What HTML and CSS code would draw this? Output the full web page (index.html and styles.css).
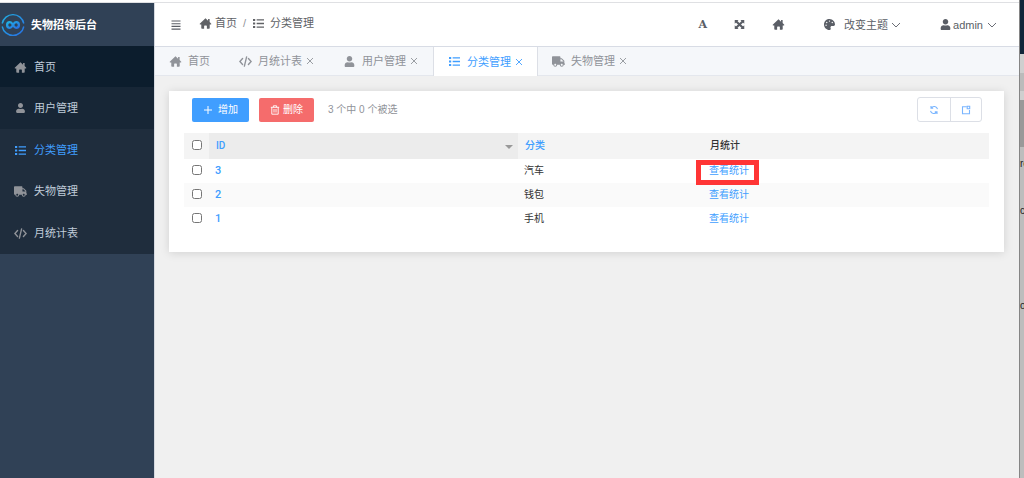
FILE: index.html
```html
<!DOCTYPE html>
<html lang="zh-CN">
<head>
<meta charset="utf-8">
<title>失物招领后台</title>
<link rel="stylesheet" href="styles.css">
</head>
<body>
<svg class="sprite" aria-hidden="true">
  <symbol id="home" viewBox="0 0 13 12"><path d="M6.500.400L.200 6.200q-.300.700.500.800H1.900V11q0 .800.800.800H5V8.600q0-.500.500-.500h2q.500 0 .500.500v3.200h2.300q.800 0 .800-.800V7h1.200q.800-.100.500-.800L11 4.400V1.200H9.300v1.700z"/></symbol>
  <symbol id="user" viewBox="0 0 448 512"><path d="M224 256c70.7 0 128-57.3 128-128S294.7 0 224 0 96 57.3 96 128s57.3 128 128 128zm89.6 32h-16.7c-22.2 10.2-46.9 16-72.9 16s-50.6-5.8-72.9-16h-16.7C60.2 288 0 348.2 0 422.4V464c0 26.5 21.5 48 48 48h352c26.5 0 48-21.5 48-48v-41.6c0-74.2-60.2-134.4-134.4-134.4z"/></symbol>
  <symbol id="list" viewBox="0 0 12 12"><path d="M0 1h2.400v2.200H0zM0 4.900h2.400v2.200H0zM0 8.800h2.400V11H0zM4 1.400h8v1.400H4zM4 5.300h8v1.400H4zM4 9.200h8v1.400H4z"/></symbol>
  <symbol id="truck" viewBox="0 0 640 512"><path d="M624 352h-16V243.900c0-12.700-5.100-24.900-14.100-33.900L494 110.100c-9-9-21.200-14.100-33.900-14.100H416V48c0-26.500-21.500-48-48-48H48C21.500 0 0 21.500 0 48v320c0 26.500 21.500 48 48 48h16c0 53 43 96 96 96s96-43 96-96h128c0 53 43 96 96 96s96-43 96-96h48c8.800 0 16-7.200 16-16v-32c0-8.800-7.200-16-16-16zM160 464c-26.500 0-48-21.500-48-48s21.500-48 48-48 48 21.500 48 48-21.500 48-48 48zm320 0c-26.500 0-48-21.500-48-48s21.500-48 48-48 48 21.500 48 48-21.500 48-48 48zm80-208H416V144h44.100l99.900 99.900V256z"/></symbol>
  <symbol id="code" viewBox="0 0 14 12"><path d="M3.800 2.800L.9 6l2.900 3.200M10.200 2.800L13.100 6l-2.900 3.200M8.200 1L5.800 11" fill="none" stroke="currentColor" stroke-width="1.500" stroke-linecap="round"/></symbol>
  <symbol id="palette" viewBox="0 0 512 512"><path d="M204.300 5C104.900 24.400 24.800 104.300 5.200 203.400c-37 187 131.700 326.400 258.800 306.700 41.200-6.400 61.400-54.600 42.500-91.700-23.100-45.400 9.900-98.400 60.900-98.400h79.700c35.800 0 64.800-29.600 64.900-65.300C511.500 97.100 368.100-26.900 204.300 5zM96 320c-17.700 0-32-14.300-32-32s14.300-32 32-32 32 14.300 32 32-14.300 32-32 32zm32-128c-17.700 0-32-14.300-32-32s14.300-32 32-32 32 14.300 32 32-14.300 32-32 32zm128-64c-17.700 0-32-14.300-32-32s14.300-32 32-32 32 14.300 32 32-14.300 32-32 32zm128 64c-17.700 0-32-14.300-32-32s14.300-32 32-32 32 14.300 32 32-14.300 32-32 32z"/></symbol>
  <symbol id="expand" viewBox="0 0 12 12"><path d="M.8 1h4.200L.8 5.200zM11.200 1v4.200L7 1zM.8 11V6.800L5 11zM11.200 11H7l4.200-4.200z"/><path d="M2.300 2.500l7.400 7M9.700 2.500l-7.400 7" stroke="currentColor" stroke-width="2.400"/></symbol>
  <symbol id="bars" viewBox="0 0 10 10"><path d="M.5 1h9M.5 3.700h9M.5 6.400h9M.5 9.100h9" stroke="currentColor" stroke-width="1.100"/></symbol>
  <symbol id="close" viewBox="0 0 8 8"><path d="M1 1l6 6M7 1L1 7" stroke="currentColor" stroke-width=".9"/></symbol>
  <symbol id="down" viewBox="0 0 10 10"><path d="M1 3l4 4 4-4" fill="none" stroke="currentColor" stroke-width=".9"/></symbol>
  <symbol id="plus" viewBox="0 0 10 10"><path d="M5 1v8M1 5h8" stroke="currentColor"/></symbol>
  <symbol id="trash" viewBox="0 0 10 10"><path d="M.8 2.300h8.400M3.400 2.300V.8h3.200v1.500M1.800 2.300v6.900h6.400V2.300M4 4v3.500M6 4v3.500" fill="none" stroke="currentColor" stroke-width=".9"/></symbol>
  <symbol id="refresh" viewBox="0 0 10 10"><path d="M2.200 2.800a3.600 3.600 0 0 1 6.300 1.400M7.800 7.200a3.600 3.600 0 0 1-6.300-1.400M2 .9v2.200h2.200M8 9.100V6.900H5.800" fill="none" stroke="currentColor" stroke-width="1.100"/></symbol>
  <symbol id="export" viewBox="0 0 10 10"><path d="M5.500 1.800H1.500v7h7V5M6.200 1.300h2.500v2.500H6.200z" fill="none" stroke="currentColor" stroke-width="1.100"/></symbol>
</svg>

<div class="window">
  <div class="app">
    <aside class="sidebar">
      <div class="brand">
        <svg class="logo" viewBox="0 0 24 24" aria-hidden="true">
          <defs><linearGradient id="ring" x1="0" y1="0" x2="1" y2="1"><stop offset="0" stop-color="#20b0e4"/><stop offset="1" stop-color="#2870e4"/></linearGradient></defs>
          <g fill="none" stroke="url(#ring)">
            <path d="M1.200 10.500a11 11 0 0 1 21.600 0M22.800 13.500a11 11 0 0 1-21.600 0" stroke-width="1.400"/>
            <path d="M12 12c-1.300-2.300-2.200-2.800-3.100-2.800a2.800 2.800 0 0 0 0 5.600c.9 0 1.800-.5 3.100-2.800s2.200-2.800 3.100-2.800a2.800 2.800 0 0 1 0 5.600c-.9 0-1.800-.5-3.100-2.800z" stroke-width="2.300"/>
          </g>
        </svg>
        <strong>失物招领后台</strong>
      </div>
      <nav class="menu">
        <a class="item item-home" href="#"><svg class="icon"><use href="#home"/></svg>首页</a>
        <a class="item item-hover" href="#"><svg class="icon icon-user"><use href="#user"/></svg>用户管理</a>
        <a class="item item-active" href="#"><svg class="icon"><use href="#list"/></svg>分类管理</a>
        <a class="item" href="#"><svg class="icon"><use href="#truck"/></svg>失物管理</a>
        <a class="item" href="#"><svg class="icon"><use href="#code"/></svg>月统计表</a>
      </nav>
    </aside>

    <div class="content">
      <header class="header">
        <button class="plain toggle" aria-label="菜单"><svg class="glyph"><use href="#bars"/></svg></button>
        <nav class="crumbs">
          <a href="#"><svg class="icon"><use href="#home"/></svg>首页</a>
          <span class="slash">/</span>
          <span class="crumb"><svg class="icon"><use href="#list"/></svg>分类管理</span>
        </nav>
        <div class="tools">
          <button class="plain font-tool" aria-label="字体">A</button>
          <button class="plain" aria-label="全屏"><svg class="icon"><use href="#expand"/></svg></button>
          <button class="plain" aria-label="主页"><svg class="icon"><use href="#home"/></svg></button>
          <button class="plain theme"><svg class="icon"><use href="#palette"/></svg><span>改变主题</span><svg class="glyph"><use href="#down"/></svg></button>
          <button class="plain account"><svg class="icon"><use href="#user"/></svg><span>admin</span><svg class="glyph"><use href="#down"/></svg></button>
        </div>
      </header>

      <nav class="tabs">
        <a class="tab" href="#"><svg class="icon"><use href="#home"/></svg>首页</a>
        <a class="tab" href="#"><svg class="icon"><use href="#code"/></svg>月统计表<svg class="close"><use href="#close"/></svg></a>
        <a class="tab" href="#"><svg class="icon"><use href="#user"/></svg>用户管理<svg class="close"><use href="#close"/></svg></a>
        <a class="tab tab-active" href="#"><svg class="icon"><use href="#list"/></svg>分类管理<svg class="close"><use href="#close"/></svg></a>
        <a class="tab" href="#"><svg class="icon"><use href="#truck"/></svg>失物管理<svg class="close"><use href="#close"/></svg></a>
      </nav>

      <main class="main">
        <section class="card">
          <div class="toolbar">
            <button class="btn btn-add"><svg class="glyph"><use href="#plus"/></svg>增加</button>
            <button class="btn btn-delete"><svg class="glyph"><use href="#trash"/></svg>删除</button>
            <span class="count">3 个中 0 个被选</span>
            <div class="group">
              <button aria-label="刷新"><svg class="glyph"><use href="#refresh"/></svg></button>
              <button aria-label="导出"><svg class="glyph"><use href="#export"/></svg></button>
            </div>
          </div>
          <table class="table">
            <colgroup><col class="col-check"><col class="col-id"><col class="col-name"><col></colgroup>
            <thead>
              <tr><th class="check"><input type="checkbox" aria-label="全选"></th><th class="sorted"><a class="id" href="#">ID</a><span class="caret"></span></th><th><a href="#">分类</a></th><th>月统计</th></tr>
            </thead>
            <tbody>
              <tr><td class="check"><input type="checkbox" aria-label="选择 3"></td><td><a class="id" href="#">3</a></td><td>汽车</td><td><a class="marked" href="#">查看统计</a></td></tr>
              <tr><td class="check"><input type="checkbox" aria-label="选择 2"></td><td><a class="id" href="#">2</a></td><td>钱包</td><td><a href="#">查看统计</a></td></tr>
              <tr><td class="check"><input type="checkbox" aria-label="选择 1"></td><td><a class="id" href="#">1</a></td><td>手机</td><td><a href="#">查看统计</a></td></tr>
            </tbody>
          </table>
        </section>
      </main>
    </div>
  </div>

  <div class="behind">
    <div class="behind-dark"></div>
    <div class="behind-light"></div>
    <div class="behind-mid"></div>
    <div class="behind-light behind-thin"></div>
    <div class="behind-block"></div>
    <div class="behind-text">re</div>
    <div class="behind-text">c</div>
    <div class="behind-text behind-last">o-</div>
  </div>
</div>
</body>
</html>
```

FILE: styles.css
```css
* { box-sizing: border-box; }
body {
  margin: 0;
  font-family: "Liberation Sans", "Noto Sans CJK SC", sans-serif;
  font-size: 11px;
  line-height: 16px;
  color: #606266;
  background: #fff;
}
a { color: inherit; text-decoration: none; }
button { font: inherit; cursor: pointer; }
svg { display: block; flex: none; fill: currentColor; }
.sprite { position: absolute; width: 0; height: 0; }
.icon { width: 13px; height: 11px; }
.glyph { width: 10px; height: 10px; }

.window { display: flex; min-height: 100vh; }
.app {
  display: flex;
  flex: 1;
  min-width: 0;
  margin-top: 2px;
  border-top: 1px solid #dfe0e3;
}

/* Sidebar */
.sidebar { width: 154px; background: #304156; }
.brand {
  display: flex;
  align-items: center;
  gap: 6px;
  height: 43px;
  padding-left: 1px;
  color: #fff;
}
.logo { width: 24px; height: 24px; }
.menu { display: flex; flex-direction: column; background: #1f2d3d; color: #bfcbd9; }
.item { display: flex; align-items: center; gap: 7px; padding: 13px 14px; }
.item .icon { color: #909399; }
.item .icon-user { height: 10px; }
.item-home { padding-bottom: 12px; background: #0c1d2d; }
.item-hover { background: #172636; }
.item-active { padding-bottom: 12px; }
.item-active, .item-active .icon { color: #409eff; }

/* Header */
.content { flex: 1; min-width: 0; background: #f0f0f0; border-left: 1px solid #d5d9e0; }
.header {
  display: flex;
  align-items: center;
  height: 44px;
  padding: 0 22px 0 16px;
  background: #fff;
  border-bottom: 1px solid #d8dce5;
}
.plain { display: flex; align-items: center; padding: 0; border: 0; background: none; color: #5a5e66; }
.crumbs, .crumbs a, .crumb { display: flex; align-items: center; }
.crumbs { gap: 5px; margin-left: 18px; padding-bottom: 3px; }
.crumbs a { gap: 3px; }
.crumb { gap: 5px; }
.slash { padding: 0 1px; color: #909399; }
.tools { display: flex; align-items: center; margin-left: auto; }
.tools .plain + .plain { margin-left: 26px; }
.tools .font-tool { font: bold 11px/16px "DejaVu Serif", serif; }
.tools .plain.theme { gap: 3px; margin-left: 38px; }
.theme span { padding-left: 5px; }
.tools .plain.account { gap: 1px; margin-left: 38px; }
.account .glyph { margin-left: 3px; }

/* Tabs */
.tabs { display: flex; background: #f5f7fa; border-bottom: 1px solid #e4e7ed; color: #909399; }
.tab { display: flex; align-items: center; gap: 6px; padding: 6px 15px 6px 14px; }
.tab .close { width: 8px; height: 8px; margin-left: -2px; }
.tab-active {
  margin-bottom: -1px;
  padding-right: 14px;
  background: #fff;
  color: #409eff;
  border: solid #dcdfe6;
  border-width: 0 1px;
}

/* Card */
.main { padding: 15px 15px 30px 14px; }
.card { padding: 6px 15px 21px; background: #fff; box-shadow: 0 1px 9px rgba(0, 0, 0, .13); }
.toolbar { display: flex; align-items: center; padding: 0 7px 11px 8px; font-size: 10px; }
.btn {
  display: flex;
  align-items: center;
  gap: 5px;
  height: 24px;
  padding: 0 11px;
  border: 0;
  border-radius: 2px;
  color: #fff;
}
.btn-add { background: #409eff; }
.btn-delete { gap: 3px; margin-left: 10px; background: #f56c6c; }
.count { margin-left: 14px; color: #909399; }
.group { display: flex; margin-left: auto; border: 1px solid #dcdfe6; border-radius: 3px; }
.group button { height: 23px; padding: 0 11px; border: 0; background: none; color: #79b5ff; }
.group button + button { padding: 0 10px; border-left: 1px solid #dcdfe6; }

.table { width: 100%; table-layout: fixed; border-collapse: collapse; font-size: 10px; color: #333; }
.col-check { width: 25px; }
.col-id { width: 309px; }
.col-name { width: 185px; }
.table th { height: 26px; padding: 0 7px; text-align: left; font-weight: 500; background: #f4f4f4; }
.table td { height: 24px; padding: 0 6px; }
.table tbody tr:nth-child(even) { background: #fafafa; }
.table a { color: #409eff; }
.table th.sorted { background: #ececec; }
.table .check { padding: 0 0 3px 8px; }
.table input { display: block; width: 10px; height: 10px; margin: 0; }
.table .id { font-family: Roboto, sans-serif; font-weight: 500; }
.table td .id { font-size: 11px; }
.caret { float: right; margin: 7px -2px 0 0; border: 4px solid transparent; border-top-color: #999; border-bottom: 0; }
.marked { position: relative; }
.marked::after { content: ""; position: absolute; inset: -5px -10px -9px -13px; border: 5px solid #ff3535; }

/* Sliver of the window behind */
.behind {
  display: flex;
  flex-direction: column;
  width: 5px;
  overflow: hidden;
  background: #bdbdbd;
  border-left: 1px solid #858585;
  font-size: 10px;
  color: #222;
}
.behind-dark { height: 54px; background: #10263a; }
.behind-light { height: 19px; background: #cfcfcf; }
.behind-mid { height: 18px; background: #bbb; }
.behind-thin { height: 9px; }
.behind-block { height: 47px; background: #999; }
.behind-text { margin-top: 9px; padding-bottom: 22px; }
.behind-last { margin-top: 57px; white-space: nowrap; }
```
